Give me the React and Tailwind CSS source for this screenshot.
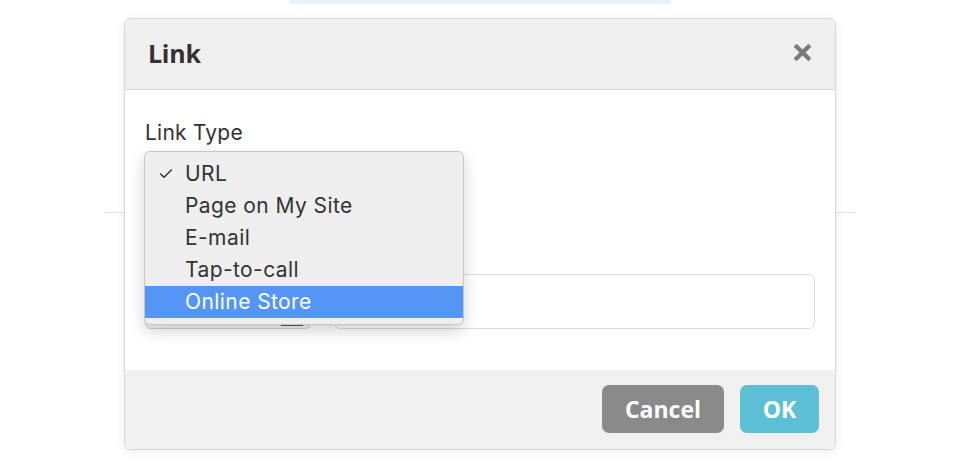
import { Check } from 'lucide-react';

const options = ['URL', 'Page on My Site', 'E-mail', 'Tap-to-call', 'Online Store'];

const LinkDialog = () => {
  const selected = 'URL';
  const hovered = 'Online Store';

  return (
    <div className="relative w-[960px] h-[467px] bg-white overflow-hidden">
      {/* page behind the dialog */}
      <div className="absolute left-[290px] top-0 w-[380px] h-[4px] bg-[#e4f4f8]" />
      <div className="absolute left-[104px] top-[212px] w-[752px] h-px bg-[#e2e2e2]" />

      <div className="relative ml-[124px] mt-[18px] w-[712px] rounded-[6px] border border-[#d7d7d7] bg-white shadow-[0_2px_8px_rgba(0,0,0,0.08)]">
        {/* header */}
        <div className="h-[71px] bg-[#efefef] rounded-t-[6px] border-b border-[#dcdcdc] flex items-center justify-between pl-[23px] pr-[22px]">
          <h2 className="text-[25px] font-bold text-[#333] font-['Open_Sans',sans-serif] tracking-[-0.01em]">Link</h2>
          <svg width="21" height="21" viewBox="0 0 20 20" className="mt-[-4px]">
            <path d="M3 3 L17 17 M17 3 L3 17" stroke="#7a7a7a" strokeWidth="4" />
          </svg>
        </div>

        {/* body */}
        <div className="h-[280px] px-[20px] pt-[29px] font-['Inter',sans-serif]">
          <label className="block text-[21px] leading-[28px] text-[#333] tracking-[0.01em]">Link Type</label>
          <div className="mt-[127px] flex gap-[23px]">
            <div className="relative w-[166px] h-[55px] rounded-[6px] border border-[#cfcfcf] bg-[#f4f4f4]">
              <div className="absolute right-[6px] bottom-[2px] w-[24px] h-[8px] rounded-[2px] bg-[#555]" />
            </div>
            <div className="flex-1 h-[55px] rounded-[6px] border border-[#dcdcdc] bg-white" />
          </div>

          {/* native select popup */}
          <div className="absolute left-[19px] top-[132px] w-[320px] rounded-[6px] border border-[#c6c6c6] bg-[#eeeeee] py-[6px] shadow-[0_6px_16px_rgba(0,0,0,0.18)]">
            {options.map(opt => (
              <div
                key={opt}
                className={`relative h-[32px] flex items-center pl-[40px] text-[21px] tracking-[0.02em] ${opt === hovered ? 'bg-[#5595f5] text-white' : 'text-[#333]'}`}
              >
                {opt === selected && (
                  <Check size={16} strokeWidth={2.2} className="absolute left-[13px] top-[8px] text-[#333]" />
                )}
                {opt}
              </div>
            ))}
          </div>
        </div>

        {/* footer */}
        <div className="h-[79px] bg-[#f0f0f0] rounded-b-[6px] flex items-start justify-end gap-[16px] pt-[15px] pr-[16px] font-['Open_Sans',sans-serif]">
          <button className="w-[122px] h-[48px] rounded-[7px] bg-[#8a8a8a] text-white text-[23px] font-bold">Cancel</button>
          <button className="w-[79px] h-[48px] rounded-[7px] bg-[#5cbfd3] text-white text-[23px] font-bold">OK</button>
        </div>
      </div>
    </div>
  );
};

export default function App() {
  return <LinkDialog />;
}
